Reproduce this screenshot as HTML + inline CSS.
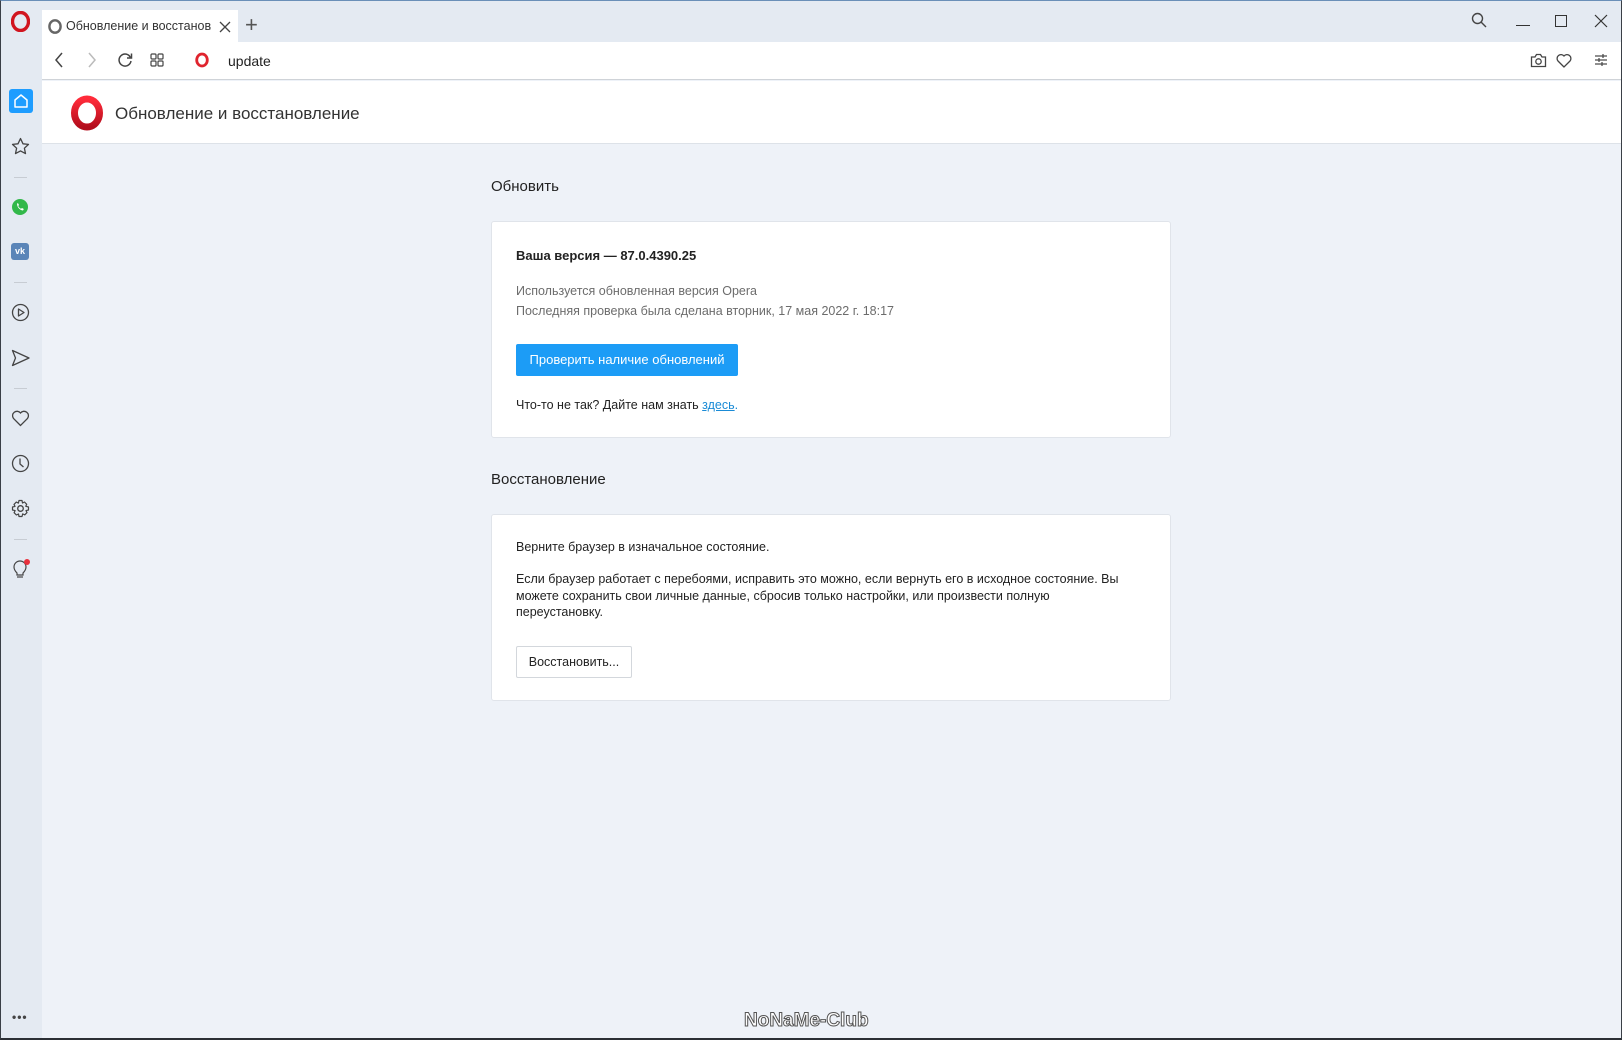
<!DOCTYPE html>
<html><head><meta charset="utf-8">
<style>
*{margin:0;padding:0;box-sizing:border-box}
html,body{width:1622px;height:1040px;overflow:hidden}
body{font-family:"Liberation Sans","Noto Sans CJK SC",sans-serif;background:#eef2f8;position:relative;color:#222}
.abs{position:absolute}
#frame{left:0;top:0;width:1622px;height:1040px;border:1px solid #3a3f46;border-top:1px solid #6a8fb8;border-bottom:2px solid #2b2f35}
#titlebar{left:1px;top:1px;width:1620px;height:41px;background:#e4eaf2}
#side{left:1px;top:42px;width:41px;height:996px;background:#e4eaf2}
#tab{left:42px;top:10px;width:196px;height:33px;background:#fff;font-size:12.5px;color:#333}
#addr{left:42px;top:42px;width:1579px;height:38px;background:#fff;border-bottom:1px solid #cfd3d8}
#hdr{left:42px;top:81px;width:1579px;height:63px;background:#fff;border-bottom:1px solid #dde2e8}
.card{background:#fff;border:1px solid #e0e4ea;border-radius:3px}
.t{position:absolute;white-space:nowrap}
.sep{position:absolute;left:14px;width:13px;height:1px;background:#c7ccd3}
svg{position:absolute}
</style></head><body>
<div class="abs" id="titlebar"></div>
<div class="abs" id="side"></div>
<svg style="left:11px;top:11px" width="19" height="21" viewBox="0 0 19 21"><ellipse cx="9.5" cy="10.5" rx="8" ry="9" fill="none" stroke="#d1151f" stroke-width="3.4"/></svg>
<div class="abs" id="tab">
 <svg style="left:6px;top:9px" width="14" height="15" viewBox="0 0 14 15"><ellipse cx="7" cy="7.5" rx="5.6" ry="6.2" fill="none" stroke="#666" stroke-width="2.4"/></svg>
 <div class="t" style="left:24px;top:9px;width:145px;overflow:hidden">Обновление и восстановл</div>
 <svg style="left:177px;top:11px" width="12" height="12" viewBox="0 0 12 12"><path d="M1 1L11 11M11 1L1 11" stroke="#444" stroke-width="1.3"/></svg>
</div>
<div class="t" style="left:245px;top:12px;font-size:22px;color:#555;font-weight:300">+</div>
<svg style="left:1471px;top:12px" width="16" height="16" viewBox="0 0 16 16"><circle cx="6.5" cy="6.5" r="5" fill="none" stroke="#444" stroke-width="1.4"/><line x1="10" y1="10" x2="15" y2="15" stroke="#444" stroke-width="1.4"/></svg>
<div class="abs" style="left:1516px;top:25px;width:14px;height:1px;background:#333"></div>
<div class="abs" style="left:1555px;top:15px;width:12px;height:12px;border:1px solid #333"></div>
<svg style="left:1594px;top:14px" width="14" height="14" viewBox="0 0 14 14"><path d="M1 1L13 13M13 1L1 13" stroke="#333" stroke-width="1.2"/></svg>
<div class="abs" id="addr">
 <svg style="left:12px;top:10px" width="10" height="16" viewBox="0 0 10 16"><path d="M8 1L2 8L8 15" fill="none" stroke="#444" stroke-width="1.5"/></svg>
 <svg style="left:45px;top:10px" width="10" height="16" viewBox="0 0 10 16"><path d="M2 1L8 8L2 15" fill="none" stroke="#bbb" stroke-width="1.5"/></svg>
 <svg style="left:75px;top:10px" width="16" height="16" viewBox="0 0 16 16"><path d="M13.5 5.5A6 6 0 1 0 14 9" fill="none" stroke="#444" stroke-width="1.5"/><path d="M14.5 1.5V6H10" fill="none" stroke="#444" stroke-width="1.5"/></svg>
 <svg style="left:108px;top:11px" width="14" height="14" viewBox="0 0 14 14"><g fill="none" stroke="#444" stroke-width="1.2"><rect x="1" y="1" width="5" height="5" rx="1"/><rect x="8" y="1" width="5" height="5" rx="1"/><rect x="1" y="8" width="5" height="5" rx="1"/><rect x="8" y="8" width="5" height="5" rx="1"/></g></svg>
 <svg style="left:153px;top:10px" width="14" height="16" viewBox="0 0 14 16"><ellipse cx="7" cy="8" rx="5.3" ry="6" fill="none" stroke="#e0242e" stroke-width="2.8"/></svg>
 <div class="t" style="left:186px;top:11px;font-size:14px;color:#222">update</div>
 <svg style="left:1488px;top:11px" width="17" height="15" viewBox="0 0 17 15"><path d="M1.5 4H5L6.5 1.5H10.5L12 4H15.5V13.5H1.5Z" fill="none" stroke="#444" stroke-width="1.3"/><circle cx="8.5" cy="8.5" r="2.7" fill="none" stroke="#444" stroke-width="1.3"/></svg>
 <svg style="left:1514px;top:11px" width="16" height="15" viewBox="0 0 16 15"><path d="M8 14L2 8A3.6 3.6 0 0 1 8 3A3.6 3.6 0 0 1 14 8Z" fill="none" stroke="#444" stroke-width="1.3"/></svg>
 <svg style="left:1552px;top:11px" width="14" height="14" viewBox="0 0 14 14"><g stroke="#444" stroke-width="1.2"><line x1="1" y1="3" x2="13" y2="3"/><line x1="1" y1="7" x2="13" y2="7"/><line x1="1" y1="11" x2="13" y2="11"/><line x1="9" y1="1" x2="9" y2="5"/><line x1="5" y1="5" x2="5" y2="9"/><line x1="8" y1="9" x2="8" y2="13"/></g></svg>
</div>
<div class="abs" id="hdr">
 <svg style="left:28px;top:14px" width="34" height="36" viewBox="0 0 34 36"><defs><linearGradient id="g" x1="0" y1="0" x2="0" y2="1"><stop offset="0" stop-color="#ff2b3a"/><stop offset="1" stop-color="#b30d1c"/></linearGradient></defs><ellipse cx="17" cy="18" rx="12.5" ry="14" fill="none" stroke="url(#g)" stroke-width="7"/></svg>
 <div class="t" style="left:73px;top:23px;font-size:17px;color:#333">Обновление и восстановление</div>
</div>
<div class="abs" style="left:9px;top:89px;width:24px;height:24px;background:#1e9dff;border-radius:3px"></div>
<svg style="left:13px;top:93px" width="16" height="16" viewBox="0 0 16 16"><path d="M2 7L8 2L14 7V14H2Z" fill="none" stroke="#fff" stroke-width="1.5" stroke-linejoin="round"/></svg>
<svg style="left:11px;top:137px" width="19" height="18" viewBox="0 0 19 18"><path d="M9.5 1.5L12 6.8L17.5 7.4L13.4 11.2L14.5 16.6L9.5 13.9L4.5 16.6L5.6 11.2L1.5 7.4L7 6.8Z" fill="none" stroke="#444" stroke-width="1.3" stroke-linejoin="round"/></svg>
<div class="sep" style="top:177px"></div>
<svg style="left:11px;top:198px" width="18" height="18" viewBox="0 0 18 18"><circle cx="9" cy="9" r="8" fill="#32b84a"/><path d="M6 5.5C6 9 8.5 12 12 12.5L12.8 11L11 10L10 10.8C8.8 10.2 7.8 9.2 7.2 8L8 7L7 5.2Z" fill="#fff"/></svg>
<div class="abs" style="left:11px;top:243px;width:18px;height:17px;background:#5a85b8;border-radius:3px;color:#fff;font-size:9px;font-weight:bold;text-align:center;line-height:17px">vk</div>
<div class="sep" style="top:282px"></div>
<svg style="left:11px;top:303px" width="19" height="19" viewBox="0 0 19 19"><circle cx="9.5" cy="9.5" r="8" fill="none" stroke="#444" stroke-width="1.3"/><path d="M7.5 6L13 9.5L7.5 13Z" fill="none" stroke="#444" stroke-width="1.3" stroke-linejoin="round"/></svg>
<svg style="left:11px;top:349px" width="19" height="18" viewBox="0 0 19 18"><path d="M1.5 1.5L18 9L1.5 16.5L4.5 9Z" fill="none" stroke="#444" stroke-width="1.3" stroke-linejoin="round"/></svg>
<div class="sep" style="top:388px"></div>
<svg style="left:11px;top:410px" width="19" height="17" viewBox="0 0 19 17"><path d="M9.5 15.5L2.5 8.5A4 4 0 0 1 9.5 3A4 4 0 0 1 16.5 8.5Z" fill="none" stroke="#444" stroke-width="1.3"/></svg>
<svg style="left:11px;top:454px" width="19" height="19" viewBox="0 0 19 19"><circle cx="9.5" cy="9.5" r="8" fill="none" stroke="#444" stroke-width="1.3"/><path d="M9 4.5V10L12.5 13" fill="none" stroke="#444" stroke-width="1.3"/></svg>
<svg style="left:11px;top:499px" width="19" height="19" viewBox="0 0 19 19"><circle cx="9.5" cy="9.5" r="2.8" fill="none" stroke="#444" stroke-width="1.3"/><path d="M8 1.5H11L11.5 4L13.5 3L15.7 5.3L14.8 7.3L17.5 8V11L15 11.6L16 13.6L13.7 15.9L11.7 14.9L11 17.5H8L7.5 15L5.4 16L3.1 13.7L4.1 11.6L1.5 11V8L4 7.4L3 5.4L5.3 3.1L7.4 4.1Z" fill="none" stroke="#444" stroke-width="1.2" stroke-linejoin="round"/></svg>
<div class="sep" style="top:539px"></div>
<svg style="left:12px;top:558px" width="20" height="22" viewBox="0 0 20 22"><path d="M5 15C3 13 2 11 2 9A6 6 0 0 1 14 9C14 11 13 13 11 15V17H5Z" fill="none" stroke="#444" stroke-width="1.2"/><line x1="5" y1="19" x2="11" y2="19" stroke="#444" stroke-width="1.2"/><circle cx="15" cy="4" r="3" fill="#e8303c"/></svg>
<div class="t" style="left:12px;top:1010px;font-size:12px;color:#444;letter-spacing:1px;font-weight:bold">•••</div>
<div class="t" style="left:491px;top:178px;font-size:15px;color:#222">Обновить</div>
<div class="abs card" style="left:491px;top:221px;width:680px;height:217px">
 <div class="t" style="left:24px;top:26px;font-size:13px;font-weight:600;color:#222">Ваша версия — 87.0.4390.25</div>
 <div class="t" style="left:24px;top:62px;font-size:12.5px;color:#6c6c6c">Используется обновленная версия Opera</div>
 <div class="t" style="left:24px;top:82px;font-size:12.5px;color:#6c6c6c">Последняя проверка была сделана вторник, 17 мая 2022 г. 18:17</div>
 <div class="abs" style="left:24px;top:122px;width:222px;height:32px;background:#1c9cf6;border-radius:2px;color:#fff;font-size:13px;line-height:32px;text-align:center">Проверить наличие обновлений</div>
 <div class="t" style="left:24px;top:176px;font-size:12.5px;color:#222">Что-то не так? Дайте нам знать <span style="color:#1a8bd6;text-decoration:underline">здесь</span><span style="color:#1a8bd6">.</span></div>
</div>
<div class="t" style="left:491px;top:471px;font-size:15px;color:#222">Восстановление</div>
<div class="abs card" style="left:491px;top:514px;width:680px;height:187px">
 <div class="t" style="left:24px;top:25px;font-size:12.5px;color:#222">Верните браузер в изначальное состояние.</div>
 <div class="t" style="left:24px;top:56px;font-size:12.5px;line-height:16.5px;color:#222">Если браузер работает с перебоями, исправить это можно, если вернуть его в исходное состояние. Вы<br>можете сохранить свои личные данные, сбросив только настройки, или произвести полную<br>переустановку.</div>
 <div class="abs" style="left:24px;top:131px;width:116px;height:32px;border:1px solid #d3d7dc;border-radius:2px;font-size:12.5px;line-height:30px;text-align:center;color:#222">Восстановить...</div>
</div>
<div class="t" style="left:744px;top:1010px;font-size:19px;font-weight:bold;color:#fff;-webkit-text-stroke:1px #555">NoNaMe-Club</div>
<div class="abs" id="frame"></div>
</body></html>
